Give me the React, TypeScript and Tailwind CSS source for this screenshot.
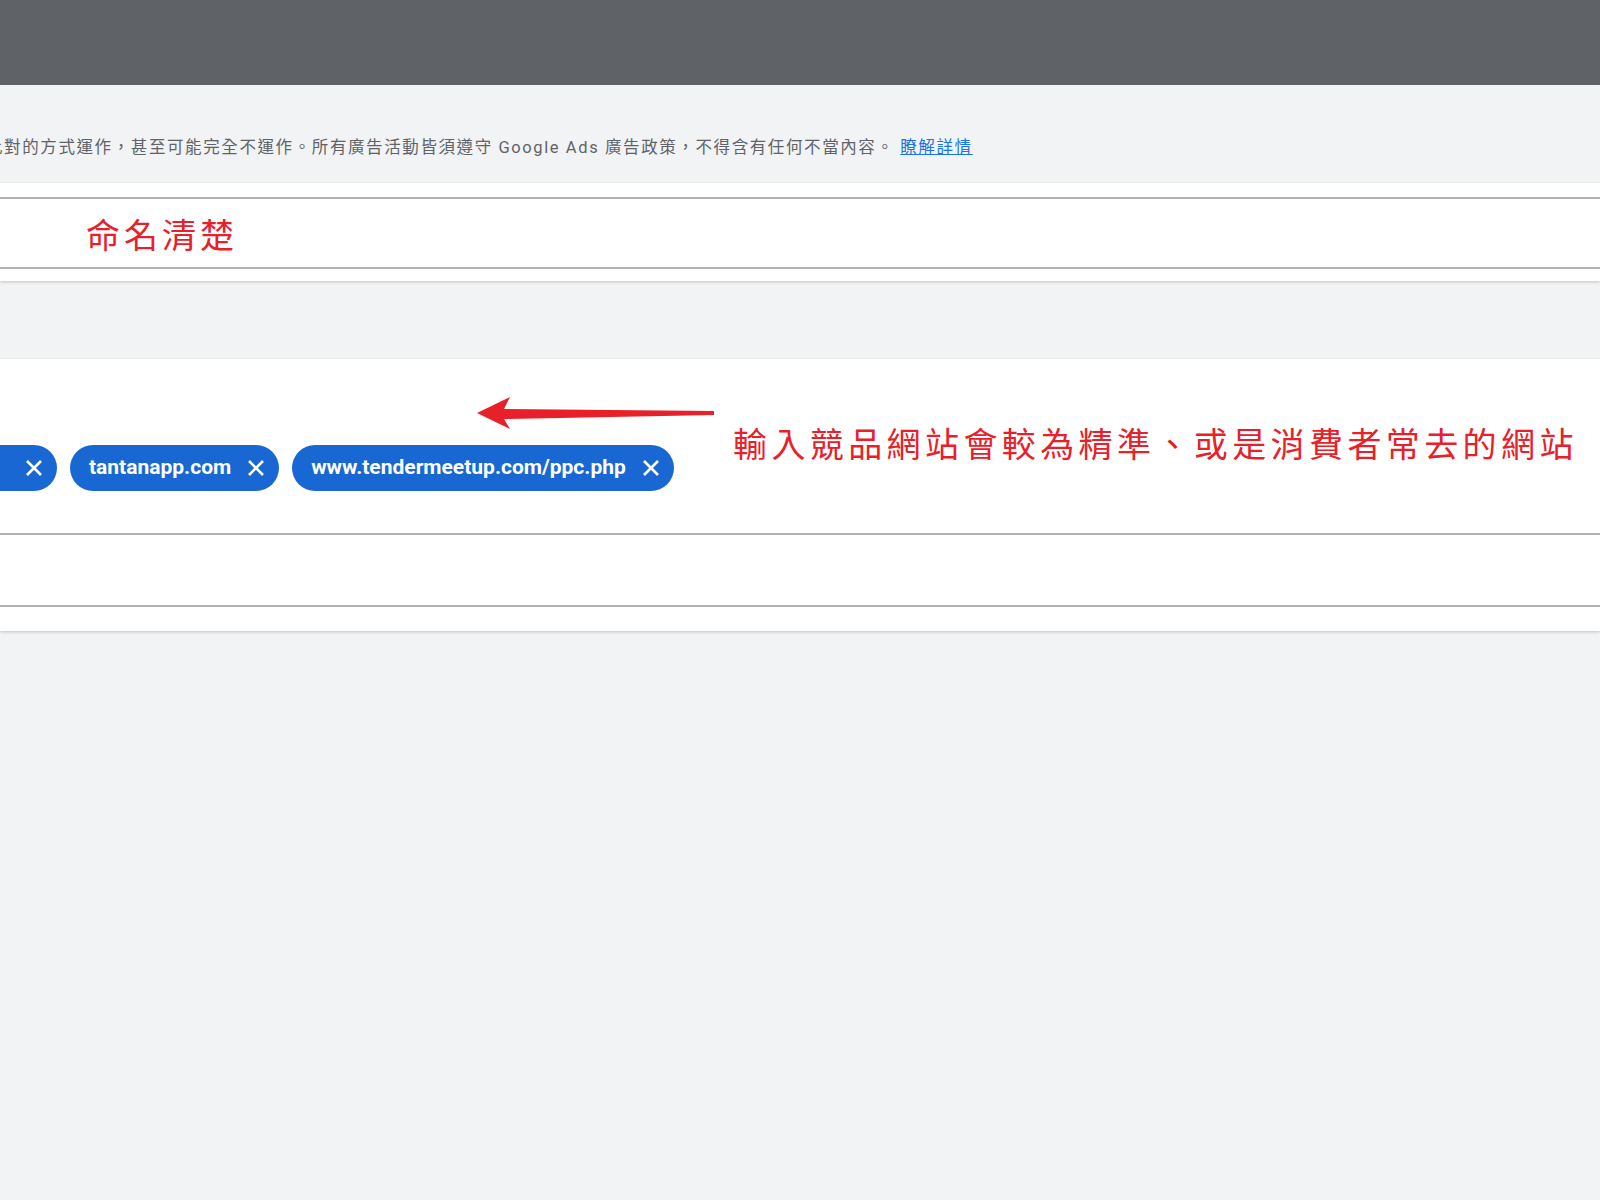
export default function App() {
  const f = { fontFamily: '"Roboto","Noto Sans CJK TC",sans-serif' };
  return (
    <div className="w-[1600px] h-[1200px] bg-[#f1f3f4] overflow-hidden" style={f}>
      <div className="h-[85px] bg-[#5f6368]" />
      <div className="h-[98px] flex items-end pb-[22px] overflow-hidden">
        <div className="ml-[-14px] whitespace-nowrap text-[16.5px] text-[#5f6368] tracking-[1.6px]">
          比對的方式運作，甚至可能完全不運作。所有廣告活動皆須遵守 Google Ads 廣告政策，不得含有任何不當內容。{" "}
          <span className="text-[#1a73e8] underline">瞭解詳情</span>
        </div>
      </div>
      <div className="bg-white shadow-[0_1px_3px_rgba(0,0,0,0.2)] pt-[14px] pb-[12px]">
        <div className="border-y-2 border-[#b0b3b6] h-[72px] flex items-center pl-[86px]">
          <span className="text-[34px] tracking-[4px] text-[#e8202a]" style={{ fontFamily: '"Noto Sans CJK TC",sans-serif' }}>命名清楚</span>
        </div>
      </div>
      <div className="h-[78px]" />
      <div className="bg-white shadow-[0_1px_3px_rgba(0,0,0,0.2)] pb-[24px]">
        <div className="h-[174px] relative flex items-center gap-[13px] ml-[-50px] pt-[44px]">
          {["x", "tantanapp.com", "www.tendermeetup.com/ppc.php"].map((t, i) => (
            <div key={i} className="h-[46px] rounded-full bg-[#1967d2] text-white font-bold text-[21px] flex items-center pl-[19px] pr-[14px] gap-[16px]">
              {i > 0 && <span>{t}</span>}
              {i === 0 && <span className="w-[40px]" />}
              <svg width="18" height="18" viewBox="0 0 18 18"><path d="M2 2L16 16M16 2L2 16" stroke="white" strokeWidth="2.6" /></svg>
            </div>
          ))}
          <svg className="absolute left-[527px] top-[36px]" width="240" height="36" viewBox="0 0 240 36">
            <path d="M0 18 L33 2 L27 14 L237 16 L237 20 L27 24 L33 34 Z" fill="#e8202a" />
          </svg>
          <span className="absolute left-[783px] top-[58px] text-[34px] tracking-[4.4px] text-[#e8202a] whitespace-nowrap" style={{ fontFamily: '"Noto Sans CJK TC",sans-serif' }}>輸入競品網站會較為精準、或是消費者常去的網站</span>
        </div>
        <div className="border-y-2 border-[#b0b3b6] h-[74px]" />
      </div>
    </div>
  );
}
